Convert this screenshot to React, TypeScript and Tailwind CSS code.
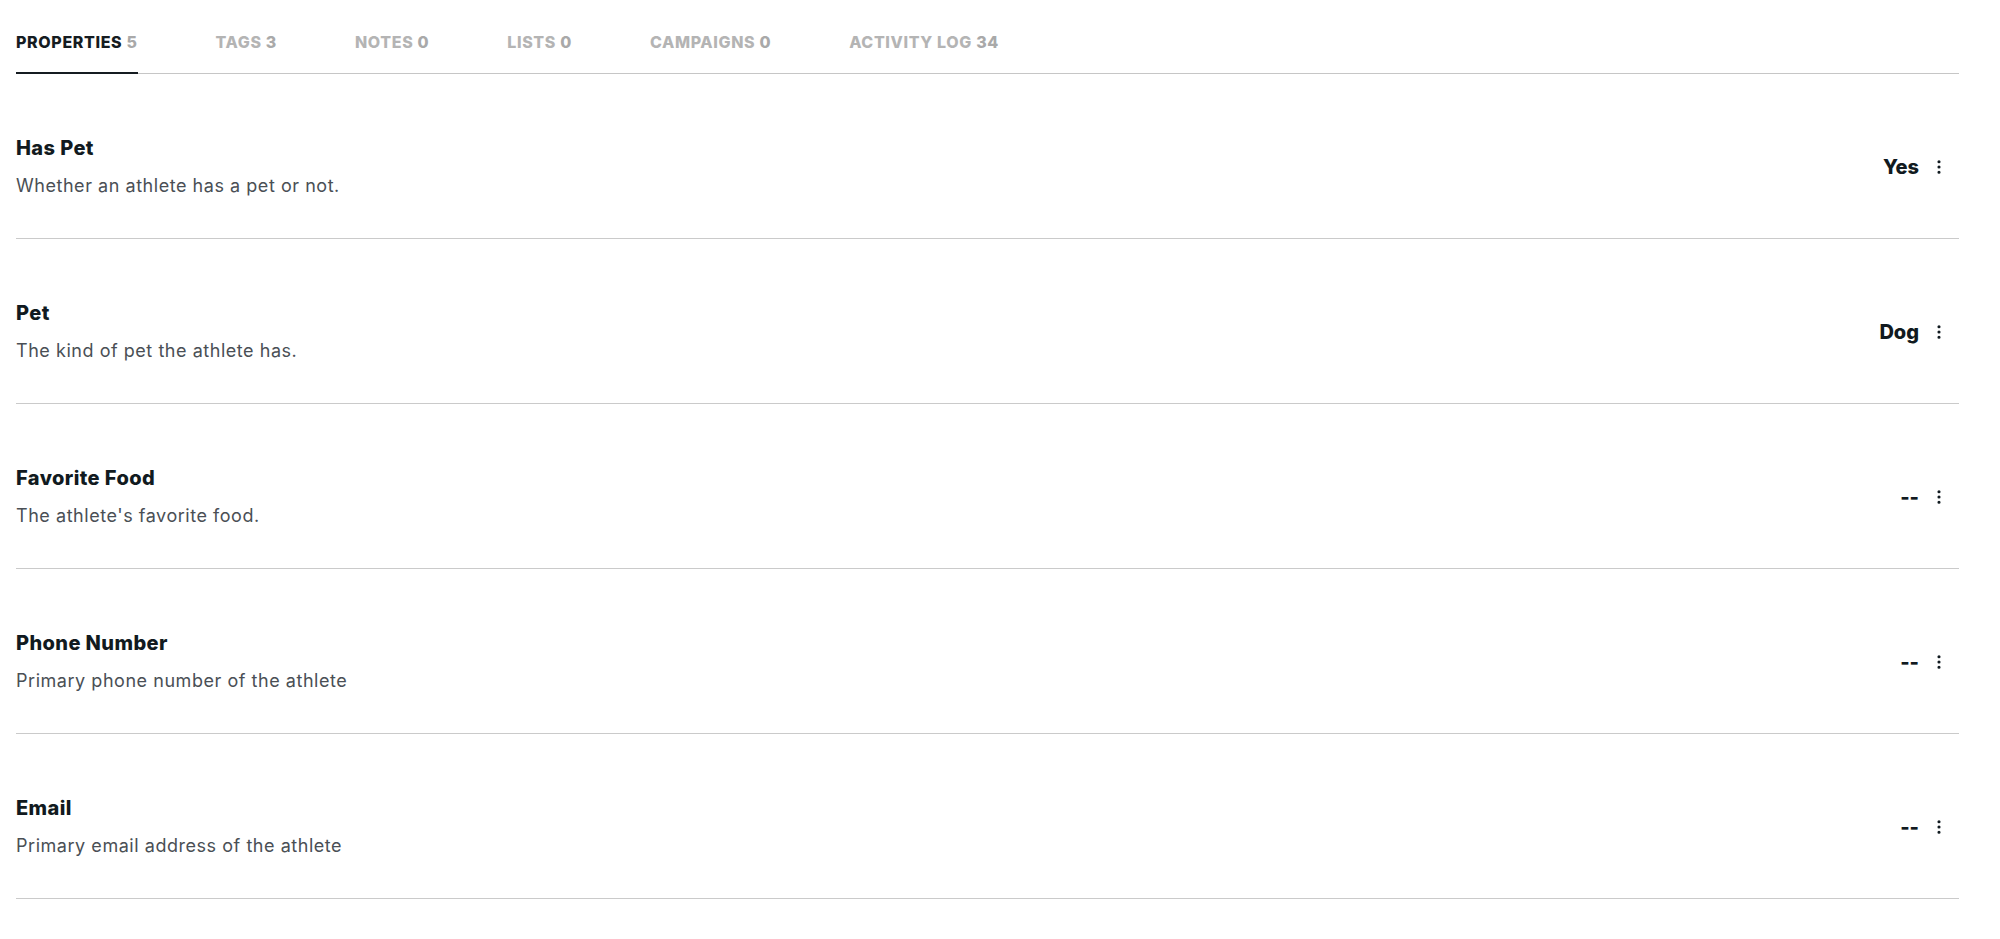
import { EllipsisVertical } from "lucide-react";

interface Tab {
  label: string;
  count: number;
}

interface Property {
  id: number;
  name: string;
  description: string;
  value?: string;
}

const tabs: Tab[] = [
  { label: "PROPERTIES", count: 5 },
  { label: "TAGS", count: 3 },
  { label: "NOTES", count: 0 },
  { label: "LISTS", count: 0 },
  { label: "CAMPAIGNS", count: 0 },
  { label: "ACTIVITY LOG", count: 34 },
];

const properties: Property[] = [
  { id: 1, name: "Has Pet", description: "Whether an athlete has a pet or not.", value: "Yes" },
  { id: 2, name: "Pet", description: "The kind of pet the athlete has.", value: "Dog" },
  { id: 3, name: "Favorite Food", description: "The athlete's favorite food." },
  { id: 4, name: "Phone Number", description: "Primary phone number of the athlete" },
  { id: 5, name: "Email", description: "Primary email address of the athlete" },
];

export default function App() {
  const active = 0;

  return (
    <div className="min-h-screen bg-white pl-4 pr-[41px] font-['Inter',sans-serif]">
      {/* Tabs */}
      <nav className="flex gap-[78px] border-b border-[#c6c6c6] pt-8">
        {tabs.map((tab, index) => (
          <button
            key={tab.label}
            className={
              index === active
                ? "-mb-px border-b-2 border-[#151c21] pb-5 text-[16px] leading-5 font-extrabold tracking-[0.04em] text-[#151c21]"
                : "-mb-px border-b-2 border-transparent pb-5 text-[16px] leading-5 font-extrabold tracking-[0.04em] text-[#b4b4b4]"
            }
          >
            {tab.label} <span className="text-[#a9a9a9]">{tab.count}</span>
          </button>
        ))}
      </nav>

      {/* Property rows */}
      {properties.map((prop) => (
        <div
          key={prop.id}
          className="flex items-center justify-between border-b border-[#cacaca] pt-[60px] pb-[38px]"
        >
          <div>
            <h3 className="text-[20px] leading-7 font-extrabold tracking-[0.02em] text-[#111a20]">
              {prop.name}
            </h3>
            <p className="mt-[10px] text-[18px] leading-7 tracking-[0.03em] text-[#4a4f55]">
              {prop.description}
            </p>
          </div>
          <div className="flex items-center">
            <span className="text-[20px] leading-7 font-extrabold text-[#111a20]">
              {prop.value ?? "--"}
            </span>
            <button className="flex w-10 items-center justify-center text-[#111a20]">
              <EllipsisVertical size={18} strokeWidth={2.2} />
            </button>
          </div>
        </div>
      ))}
    </div>
  );
}
